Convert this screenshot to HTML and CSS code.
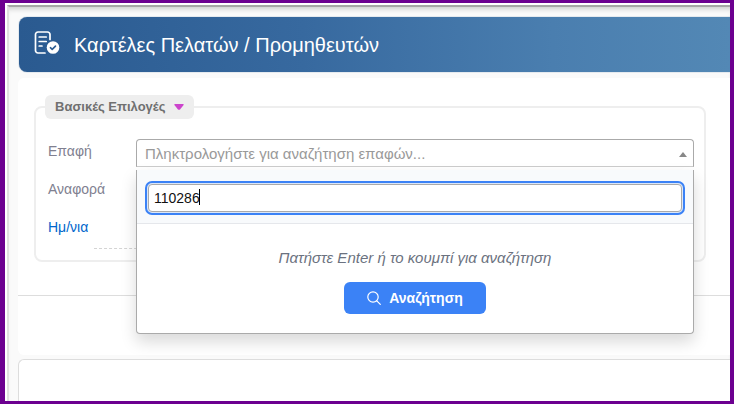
FILE: index.html
```html
<!DOCTYPE html>
<html lang="el">
<head>
<meta charset="utf-8">
<meta name="viewport" content="width=device-width, initial-scale=1">
<title>Καρτέλες Πελατών / Προμηθευτών</title>
<link rel="stylesheet" href="styles.css">
</head>
<body>
<main class="page">
  <header class="title-bar">
    <svg class="title-icon" viewBox="0 0 26 24" fill="none" stroke="#fff" stroke-width="1.7" stroke-linecap="round" stroke-linejoin="round" aria-hidden="true">
      <path d="M11 22H4A2.500 2.500 0 0 1 1.500 19.500V3.500A2.500 2.500 0 0 1 4 1H13.500A2.500 2.500 0 0 1 16 3.500V8.500"/>
      <path d="M5.200 6H12.200M5.200 10.500H12.200M5.200 15H8"/>
      <circle cx="19" cy="16.500" r="6.300" fill="#fff" stroke="none"/>
      <path d="M16.400 16.700L18.200 18.400L21.500 15.100" stroke="#2c5d93" stroke-width="1.600"/>
    </svg>
    <h1 class="title">Καρτέλες Πελατών / Προμηθευτών</h1>
  </header>

  <section class="card filters">
    <fieldset class="group">
      <legend class="legend">Βασικές Επιλογές
        <svg class="legend-arrow" viewBox="0 0 10 6" aria-hidden="true"><path d="M1 0H9Q10 0 9.600 1L6 5.400Q5 6.200 4 5.400L.4 1Q0 0 1 0Z" fill="#cc44cc"/></svg>
      </legend>
      <div class="row">
        <label class="label" for="contact">Επαφή</label>
        <div class="combo">
          <button class="combo-button" id="contact" type="button" aria-haspopup="true" aria-expanded="true">
            <span class="combo-text">Πληκτρολογήστε για αναζήτηση επαφών...</span>
            <span class="combo-arrow"></span>
          </button>
          <div class="dropdown">
            <div class="search">
              <div class="search-ring">
                <input class="search-input" type="text" value="110286" aria-label="Αναζήτηση επαφών">
                <span class="caret"></span>
              </div>
            </div>
            <div class="prompt">
              <p class="hint">Πατήστε Enter ή το κουμπί για αναζήτηση</p>
              <button class="search-button" type="button">
                <svg class="search-icon" viewBox="0 0 14 14" fill="none" stroke="#fff" stroke-width="1.200" stroke-linecap="round" aria-hidden="true"><circle cx="6" cy="6" r="5.200"/><path d="M9.800 9.800L13.300 13.300"/></svg>
                Αναζήτηση
              </button>
            </div>
          </div>
        </div>
      </div>
      <div class="row"><span class="label">Αναφορά</span></div>
      <div class="row"><a class="label link" href="#">Ημ/νια</a></div>
      <div class="dashes"></div>
    </fieldset>
    <hr class="rule">
  </section>

  <section class="card results"></section>
</main>
</body>
</html>
```
FILE: styles.css
```css
* {
  box-sizing: border-box;
}

body {
  margin: 0;
  height: 100vh;
  overflow: hidden;
  border: solid #6c0090;
  border-width: 3px 4px 3px 5px;
  background: #fff;
  padding: 2px 0 0 2px;
  font: 14px/20px "Liberation Sans", Arial, sans-serif;
  color: #808090;
}

.page {
  display: flex;
  flex-direction: column;
  height: 100%;
  padding: 10px 0 0 9px;
  border-top: 2px solid #a6a6a6;
  border-left: 2px solid #e0e0e0;
  background: #fafafa;
  box-shadow: inset 0 5px 5px -3px #ccc;
}

.title-bar {
  display: flex;
  align-items: center;
  gap: 14px;
  height: 55px;
  margin-left: 1px;
  padding: 0 15px;
  border-radius: 8px 0 0 8px;
  background: linear-gradient(90deg, #2a5a90, #37699f 40%, #4a7eaf 75%, #5388b5);
  box-shadow: 0 0 1px #2a5a90;
}

.title-icon {
  width: 26px;
  height: 24px;
  margin-bottom: 4px;
}

.title {
  margin: 0;
  color: #fff;
  font-size: 20px;
  font-weight: 400;
  line-height: 24px;
}

.card {
  background: #fff;
  border-radius: 6px 0 0 6px;
}

.filters {
  margin-top: 6px;
  padding-top: 17px;
  padding-bottom: 59px;
}

.group {
  min-width: 0;
  margin: 0 24px 0 16px;
  padding: 13px 10px 11px 12px;
  border: 2px solid #eee;
  border-radius: 8px;
}

.legend {
  display: flex;
  align-items: center;
  gap: 9px;
  margin-left: -3px;
  padding: 2px 10px;
  border-radius: 6px;
  background: #eee;
  color: #707070;
  font-size: 13px;
  font-weight: 700;
}

.legend-arrow {
  width: 10px;
  height: 6px;
}

.row {
  display: grid;
  grid-template-columns: 88px 1fr;
  align-items: start;
  min-height: 38px;
}

.label {
  padding-top: 9px;
}

.link {
  color: #0066cc;
  text-decoration: none;
}

.dashes {
  margin-top: 2px;
  margin-left: 46px;
  border-top: 1px dashed #d4d4d4;
}

.combo {
  position: relative;
  padding-top: 7px;
}

.combo-button {
  display: flex;
  align-items: center;
  justify-content: space-between;
  width: 100%;
  padding: 4px 6px 2px 8px;
  border: 1px solid #aaa;
  border-bottom-color: #ccc;
  border-radius: 4px 4px 0 0;
  background: #fff;
  color: #999;
  font: inherit;
  font-size: 15px;
  text-align: left;
}

.combo-arrow {
  border: solid transparent;
  border-width: 0 4px 5px;
  border-bottom-color: #888;
}

.dropdown {
  position: absolute;
  top: calc(100% + 3px);
  left: 0;
  right: 0;
  border: 1px solid #aaa;
  border-top: 0;
  border-radius: 0 0 4px 4px;
  background: #fff;
  box-shadow: 0 8px 16px rgba(0, 0, 0, .15);
}

.search {
  padding: 11px 8px 8px;
  border-bottom: 1px solid #e5e7eb;
  background: #f8fafc;
}

.search-ring {
  position: relative;
  padding: 1px;
  border: 2px solid #3b82f6;
  border-radius: 7px;
  background: #dbe7f8;
}

.search-input {
  display: block;
  width: 100%;
  padding: 3px 5px;
  border: 1px solid #aaa;
  border-radius: 4px;
  outline: 0;
  background: #fff;
  color: #111;
  font: inherit;
}

.caret {
  position: absolute;
  top: 6px;
  left: 52px;
  width: 1px;
  height: 16px;
  background: #000;
}

.prompt {
  display: flex;
  flex-direction: column;
  align-items: center;
  gap: 14px;
  padding: 24px 10px 19px;
}

.hint {
  margin: 0;
  color: #6b7280;
  font-size: 15px;
  font-style: italic;
}

.search-button {
  display: flex;
  align-items: center;
  gap: 8px;
  padding: 6px 23px;
  border: 0;
  border-radius: 6px;
  background: #3b82f6;
  color: #fff;
  font: inherit;
  font-weight: 700;
}

.search-icon {
  width: 14px;
  height: 14px;
}

.rule {
  margin: 33px 0 0;
  border: 0;
  border-top: 1px solid #ddd;
}

.results {
  flex: 1;
  margin-top: 4px;
  border: 1px solid #ddd;
  border-width: 1px 0 0 1px;
  border-radius: 6px 0 0 0;
}
```
